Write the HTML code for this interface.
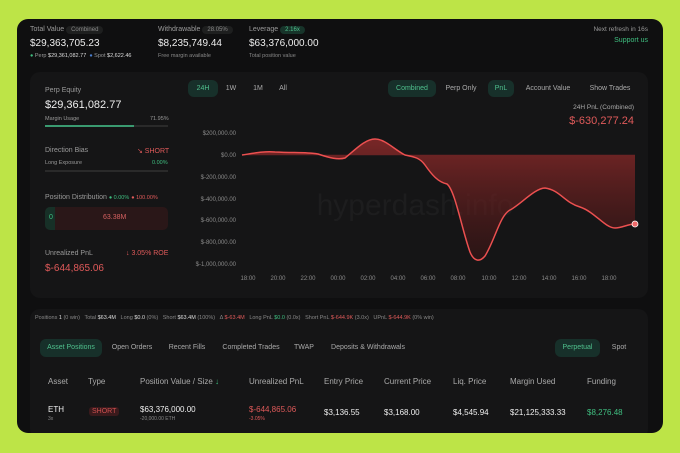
<!DOCTYPE html>
<html><head><meta charset="utf-8"><style>
*{box-sizing:border-box;margin:0;padding:0}
body{width:680px;height:453px;background:#bde447;font-family:"Liberation Sans",sans-serif;position:relative;overflow:hidden;color:#e6e6e6}
.card{position:absolute;left:17px;top:19px;width:646px;height:414px;background:#0f0f10;border-radius:11px;overflow:hidden}
.a{position:absolute;white-space:nowrap}
.s{font-size:7px;color:#9a9a9a}
.pill{display:inline-block;padding:1px 5px;border-radius:6px;background:#1e1f1f;font-size:6px;color:#888}
.big{font-size:10px;color:#ededed}
.panel{position:absolute;background:#151516;border-radius:10px}
.tab{position:absolute;font-size:7px;color:#aaa;text-align:center;border-radius:6px}
.on{background:#17302a;color:#4fc08d}
.red{color:#e05a5a}.grn{color:#3fbf80}
.yl{position:absolute;right:0;font-size:6px;color:#8a8a8a}
</style></head><body>
<div class="card">
 <div class="a s" style="left:13px;top:7px">Total Value <span class="pill">Combined</span></div>
 <div class="a big" style="left:13px;top:19px">$29,363,705.23</div>
 <div class="a" style="left:13px;top:34px;font-size:5.5px;color:#999"><span class="grn">●</span> Perp <b style="color:#ddd;font-weight:normal">$29,361,082.77</b> &nbsp;<span style="color:#4a7fd0">●</span> Spot <span style="color:#ddd">$2,622.46</span></div>
 <div class="a s" style="left:141px;top:7px">Withdrawable <span class="pill">28.05%</span></div>
 <div class="a big" style="left:141px;top:19px">$8,235,749.44</div>
 <div class="a" style="left:141px;top:34px;font-size:5.5px;color:#888">Free margin available</div>
 <div class="a s" style="left:232px;top:7px">Leverage <span class="pill" style="background:#17342a;color:#4fc08d">2.16x</span></div>
 <div class="a big" style="left:232px;top:19px">$63,376,000.00</div>
 <div class="a" style="left:232px;top:34px;font-size:5.5px;color:#888">Total position value</div>
 <div class="a" style="right:15px;top:7px;font-size:6.5px;color:#999">Next refresh in 16s</div>
 <div class="a grn" style="right:15px;top:18px;font-size:7px">Support us</div>

 <div class="panel" style="left:13px;top:53px;width:618px;height:226px">
  <div class="a s" style="left:15px;top:15px;font-size:7px">Perp Equity</div>
  <div class="a" style="left:15px;top:27px;font-size:11px;color:#eee">$29,361,082.77</div>
  <div class="a" style="left:15px;top:44px;font-size:5.5px;color:#999">Margin Usage</div>
  <div class="a" style="left:120px;top:44px;font-size:5.5px;color:#999">71.95%</div>
  <div class="a" style="left:15px;top:53px;width:123px;height:2px;background:#2a2a2a"><div style="width:72%;height:2px;background:#3a9a70"></div></div>
  <div class="a s" style="left:15px;top:75px">Direction Bias</div>
  <div class="a red" style="left:107px;top:75px;font-size:7px">↘ SHORT</div>
  <div class="a" style="left:15px;top:88px;font-size:5.5px;color:#999">Long Exposure</div>
  <div class="a grn" style="left:122px;top:88px;font-size:5.5px">0.00%</div>
  <div class="a" style="left:15px;top:98px;width:123px;height:2px;background:#2a2a2a"></div>
  <div class="a s" style="left:15px;top:122px">Position Distribution <span class="grn" style="font-size:5.5px">● 0.00%</span> <span class="red" style="font-size:5.5px">● 100.00%</span></div>
  <div class="a" style="left:15px;top:135px;width:123px;height:23px;background:#2a1718;border-radius:5px"><div style="position:absolute;left:0;top:0;width:10px;height:23px;background:#173027;border-radius:5px 0 0 5px"></div><span class="grn" style="position:absolute;left:4px;top:7px;font-size:7px">0</span><span style="position:absolute;left:58px;top:7px;font-size:7px;color:#d46060">63.38M</span></div>
  <div class="a s" style="left:15px;top:178px">Unrealized PnL</div>
  <div class="a red" style="left:96px;top:178px;font-size:7px">↓ 3.05% ROE</div>
  <div class="a red" style="left:15px;top:191px;font-size:10px">$-644,865.06</div>

  <div class="tab on" style="left:158px;top:8px;width:30px;height:17px;line-height:17px">24H</div>
  <div class="tab" style="left:191px;top:8px;width:20px;height:17px;line-height:17px">1W</div>
  <div class="tab" style="left:218px;top:8px;width:20px;height:17px;line-height:17px">1M</div>
  <div class="tab" style="left:243px;top:8px;width:20px;height:17px;line-height:17px">All</div>
  <div class="tab on" style="left:358px;top:8px;width:48px;height:17px;line-height:17px">Combined</div>
  <div class="tab" style="left:410px;top:8px;width:42px;height:17px;line-height:17px">Perp Only</div>
  <div class="tab on" style="left:458px;top:8px;width:26px;height:17px;line-height:17px">PnL</div>
  <div class="tab" style="left:490px;top:8px;width:56px;height:17px;line-height:17px">Account Value</div>
  <div class="tab" style="left:552px;top:8px;width:56px;height:17px;line-height:17px">Show Trades</div>
  <div class="a" style="right:14px;top:32px;font-size:6.5px;color:#aaa">24H PnL (Combined)</div>
  <div class="a red" style="right:14px;top:43px;font-size:11px">$-630,277.24</div>
 </div>

 <svg class="a" style="left:0;top:0" width="646" height="300" viewBox="17 19 646 300">
  <defs><linearGradient id="g" x1="0" y1="0" x2="0" y2="1"><stop offset="0" stop-color="#8a2a2a" stop-opacity=".85"/><stop offset="1" stop-color="#4a1515" stop-opacity=".4"/></linearGradient>
  <clipPath id="cl"><rect x="230" y="155" width="420" height="120"/></clipPath><clipPath id="cu"><rect x="230" y="100" width="420" height="55"/></clipPath></defs>
  <g font-family="Liberation Sans" font-size="6" fill="#8a8a8a" text-anchor="end">
   <text x="236" y="135">$200,000.00</text><text x="236" y="157">$0.00</text><text x="236" y="179">$-200,000.00</text><text x="236" y="201">$-400,000.00</text><text x="236" y="222">$-600,000.00</text><text x="236" y="244">$-800,000.00</text><text x="236" y="266">$-1,000,000.00</text>
  </g>
  <g font-family="Liberation Sans" font-size="6" fill="#8a8a8a" text-anchor="middle">
   <text x="248" y="280">18:00</text><text x="278" y="280">20:00</text><text x="308" y="280">22:00</text><text x="338" y="280">00:00</text><text x="368" y="280">02:00</text><text x="398" y="280">04:00</text><text x="428" y="280">06:00</text><text x="458" y="280">08:00</text><text x="489" y="280">10:00</text><text x="519" y="280">12:00</text><text x="549" y="280">14:00</text><text x="579" y="280">16:00</text><text x="609" y="280">18:00</text>
  </g>
  <text x="415" y="215" font-family="Liberation Sans" font-size="30" fill="#1d1d1e" text-anchor="middle">hyperdash.info</text>
  <path id="c" d="M242,155 C255,153 265,151 275,152 C295,153 305,152 318,154 C330,158 338,160 345,158 C355,150 365,139 375,139 C385,139 395,150 405,155 C415,157 420,158 425,165 C432,175 438,182 447,184 C455,190 462,230 470,252 C474,262 480,262 485,256 C495,240 500,215 510,210 C520,205 535,188 545,188 C560,190 565,203 580,207 C595,212 605,228 615,228 C622,228 628,224 635,224" fill="none"/>
  <path d="M242,155 C255,153 265,151 275,152 C295,153 305,152 318,154 C330,158 338,160 345,158 C355,150 365,139 375,139 C385,139 395,150 405,155 C415,157 420,158 425,165 C432,175 438,182 447,184 C455,190 462,230 470,252 C474,262 480,262 485,256 C495,240 500,215 510,210 C520,205 535,188 545,188 C560,190 565,203 580,207 C595,212 605,228 615,228 C622,228 628,224 635,224 L635,155 Z" fill="url(#g)"/>
  <line x1="242" y1="155" x2="635" y2="155" stroke="#6a2525" stroke-width="0.6"/>
  <use href="#c" stroke="#ec5050" stroke-width="1.5"/>
  <circle cx="635" cy="224" r="3" fill="#f06a6a" stroke="#fff" stroke-width=".8"/>
 </svg>

 <div class="panel" style="left:13px;top:290px;width:618px;height:130px"></div>
 <div class="a" style="left:18px;top:296px;font-size:5.5px;color:#888">Positions <span style="color:#ddd">1</span> (0 win) &nbsp; Total <span style="color:#ddd">$63.4M</span> &nbsp; Long <span style="color:#ddd">$0.0</span> (0%) &nbsp; Short <span style="color:#ddd">$63.4M</span> (100%) &nbsp; Δ <span class="red">$-63.4M</span> &nbsp; Long PnL <span class="grn">$0.0</span> (0.0x) &nbsp; Short PnL <span class="red">$-644.9K</span> (3.0x) &nbsp; UPnL <span class="red">$-644.9K</span> (0% win)</div>
 <div class="tab on" style="left:23px;top:320px;width:62px;height:18px;line-height:18px">Asset Positions</div>
 <div class="tab" style="left:90px;top:320px;width:50px;height:18px;line-height:18px">Open Orders</div>
 <div class="tab" style="left:146px;top:320px;width:48px;height:18px;line-height:18px">Recent Fills</div>
 <div class="tab" style="left:200px;top:320px;width:68px;height:18px;line-height:18px">Completed Trades</div>
 <div class="tab" style="left:272px;top:320px;width:30px;height:18px;line-height:18px">TWAP</div>
 <div class="tab" style="left:308px;top:320px;width:86px;height:18px;line-height:18px">Deposits &amp; Withdrawals</div>
 <div class="tab on" style="left:538px;top:320px;width:45px;height:18px;line-height:18px">Perpetual</div>
 <div class="tab" style="left:588px;top:320px;width:28px;height:18px;line-height:18px">Spot</div>
 <div class="a" style="top:358px;left:31px;font-size:8px;color:#aaa">Asset</div>
 <div class="a" style="top:358px;left:71px;font-size:8px;color:#aaa">Type</div>
 <div class="a" style="top:358px;left:123px;font-size:8px;color:#aaa">Position Value / Size <span class="grn">↓</span></div>
 <div class="a" style="top:358px;left:232px;font-size:8px;color:#aaa">Unrealized PnL</div>
 <div class="a" style="top:358px;left:307px;font-size:8px;color:#aaa">Entry Price</div>
 <div class="a" style="top:358px;left:367px;font-size:8px;color:#aaa">Current Price</div>
 <div class="a" style="top:358px;left:436px;font-size:8px;color:#aaa">Liq. Price</div>
 <div class="a" style="top:358px;left:493px;font-size:8px;color:#aaa">Margin Used</div>
 <div class="a" style="top:358px;left:570px;font-size:8px;color:#aaa">Funding</div>
 <div class="a" style="top:386px;left:31px;font-size:8px;color:#eee">ETH</div>
 <div class="a" style="top:397px;left:31px;font-size:5px;color:#888">3x</div>
 <div class="a" style="top:388px;left:72px;font-size:7px;color:#d05050;background:#3a1a1c;padding:1px 3px;border-radius:3px">SHORT</div>
 <div class="a" style="top:386px;left:123px;font-size:8px;color:#eee">$63,376,000.00</div>
 <div class="a" style="top:397px;left:123px;font-size:5px;color:#888">-20,000.00 ETH</div>
 <div class="a red" style="top:386px;left:232px;font-size:8px">$-644,865.06</div>
 <div class="a red" style="top:397px;left:232px;font-size:5px">-3.05%</div>
 <div class="a" style="top:389px;left:307px;font-size:8px;color:#eee">$3,136.55</div>
 <div class="a" style="top:389px;left:367px;font-size:8px;color:#eee">$3,168.00</div>
 <div class="a" style="top:389px;left:436px;font-size:8px;color:#eee">$4,545.94</div>
 <div class="a" style="top:389px;left:493px;font-size:8px;color:#eee">$21,125,333.33</div>
 <div class="a grn" style="top:389px;left:570px;font-size:8px">$8,276.48</div>
</div>
</body></html>
